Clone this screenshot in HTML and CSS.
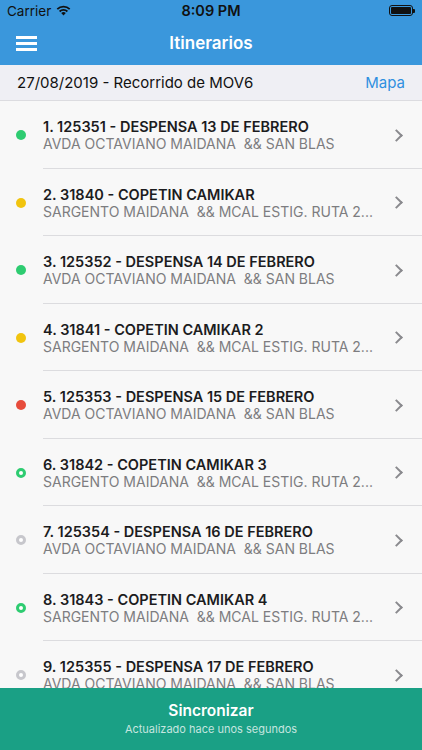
FILE: index.html
```html
<!DOCTYPE html>
<html lang="es">

<head>
    <meta charset="UTF-8">
    <meta name="viewport" content="width=device-width, initial-scale=1.0">
    <title>Itinerarios</title>
    <link rel="stylesheet" href="styles.css">
</head>

<body>
    <div class="app">
        <header class="topbar">
            <div class="status">
                <div class="status-left">
                    <span>Carrier</span>
                    <svg class="wifi" width="15" height="11" viewBox="0 0 15 11">
                        <path d="M7.5 10.5 L5.2 8.1 A3.3 3.3 0 0 1 9.8 8.1 Z" fill="#111"/>
                        <path d="M3.6 6.5 A5.6 5.6 0 0 1 11.4 6.5" stroke="#111" stroke-width="1.8" fill="none"/>
                        <path d="M1.3 4.2 A8.8 8.8 0 0 1 13.7 4.2" stroke="#111" stroke-width="1.8" fill="none"/>
                    </svg>
                </div>
                <div class="status-time">8:09 PM</div>
                <div class="status-right">
                    <div class="battery"><div class="battery-level"></div></div>
                    <div class="battery-tip"></div>
                </div>
            </div>
            <nav class="navbar">
                <button class="menu-btn" aria-label="menu">
                    <span></span><span></span><span></span>
                </button>
                <h1 class="nav-title">Itinerarios</h1>
            </nav>
        </header>

        <div class="subheader">
            <span class="route">27/08/2019 - Recorrido de MOV6</span>
            <a class="map-link" href="#">Mapa</a>
        </div>

        <ul class="stops">
            <li class="stop">
                <span class="dot green"></span>
                <div class="stop-text">
                    <div class="stop-title">1. 125351 - DESPENSA 13 DE FEBRERO</div>
                    <div class="stop-addr">AVDA OCTAVIANO MAIDANA  &amp;&amp; SAN BLAS</div>
                </div>
                <span class="chevron"></span>
            </li>
            <li class="stop">
                <span class="dot yellow"></span>
                <div class="stop-text">
                    <div class="stop-title">2. 31840 - COPETIN CAMIKAR</div>
                    <div class="stop-addr">SARGENTO MAIDANA  &amp;&amp; MCAL ESTIG. RUTA 2...</div>
                </div>
                <span class="chevron"></span>
            </li>
            <li class="stop">
                <span class="dot green"></span>
                <div class="stop-text">
                    <div class="stop-title">3. 125352 - DESPENSA 14 DE FEBRERO</div>
                    <div class="stop-addr">AVDA OCTAVIANO MAIDANA  &amp;&amp; SAN BLAS</div>
                </div>
                <span class="chevron"></span>
            </li>
            <li class="stop">
                <span class="dot yellow"></span>
                <div class="stop-text">
                    <div class="stop-title">4. 31841 - COPETIN CAMIKAR 2</div>
                    <div class="stop-addr">SARGENTO MAIDANA  &amp;&amp; MCAL ESTIG. RUTA 2...</div>
                </div>
                <span class="chevron"></span>
            </li>
            <li class="stop">
                <span class="dot red"></span>
                <div class="stop-text">
                    <div class="stop-title">5. 125353 - DESPENSA 15 DE FEBRERO</div>
                    <div class="stop-addr">AVDA OCTAVIANO MAIDANA  &amp;&amp; SAN BLAS</div>
                </div>
                <span class="chevron"></span>
            </li>
            <li class="stop">
                <span class="dot ring-green"></span>
                <div class="stop-text">
                    <div class="stop-title">6. 31842 - COPETIN CAMIKAR 3</div>
                    <div class="stop-addr">SARGENTO MAIDANA  &amp;&amp; MCAL ESTIG. RUTA 2...</div>
                </div>
                <span class="chevron"></span>
            </li>
            <li class="stop">
                <span class="dot ring-grey"></span>
                <div class="stop-text">
                    <div class="stop-title">7. 125354 - DESPENSA 16 DE FEBRERO</div>
                    <div class="stop-addr">AVDA OCTAVIANO MAIDANA  &amp;&amp; SAN BLAS</div>
                </div>
                <span class="chevron"></span>
            </li>
            <li class="stop">
                <span class="dot ring-green"></span>
                <div class="stop-text">
                    <div class="stop-title">8. 31843 - COPETIN CAMIKAR 4</div>
                    <div class="stop-addr">SARGENTO MAIDANA  &amp;&amp; MCAL ESTIG. RUTA 2...</div>
                </div>
                <span class="chevron"></span>
            </li>
            <li class="stop">
                <span class="dot ring-grey"></span>
                <div class="stop-text">
                    <div class="stop-title">9. 125355 - DESPENSA 17 DE FEBRERO</div>
                    <div class="stop-addr">AVDA OCTAVIANO MAIDANA  &amp;&amp; SAN BLAS</div>
                </div>
                <span class="chevron"></span>
            </li>
        </ul>

        <button class="sync">
            <span class="sync-title">Sincronizar</span>
            <span class="sync-sub">Actualizado hace unos segundos</span>
        </button>
    </div>
</body>

</html>
```

FILE: styles.css
```css
* {
    box-sizing: border-box;
}

body {
    margin: 0;
    font-family: Inter, "Noto Sans", sans-serif;
    background-color: #f8f8f8;
}

.app {
    display: flex;
    flex-direction: column;
    height: 750px;
    overflow: hidden;
}

/* top blue area */
.topbar {
    background-color: #3a97dc;
    height: 65px;
}

.status {
    display: flex;
    align-items: center;
    justify-content: space-between;
    height: 21px;
    padding: 0 7px;
    font-size: 13.5px;
    color: #111;
}

.status-left {
    display: flex;
    align-items: center;
    gap: 5px;
    width: 80px;
}

.status-time {
    font-weight: 600;
    font-size: 14.5px;
}

.status-right {
    display: flex;
    align-items: center;
    justify-content: flex-end;
    width: 80px;
}

.battery {
    width: 24px;
    height: 11px;
    border: 1px solid #111;
    border-radius: 3px;
    padding: 1px;
}

.battery-level {
    height: 100%;
    background-color: #111;
    border-radius: 1px;
}

.battery-tip {
    width: 1.5px;
    height: 4px;
    background-color: #111;
    border-radius: 0 1px 1px 0;
}

.navbar {
    position: relative;
    display: flex;
    align-items: center;
    justify-content: center;
    height: 44px;
}

.menu-btn {
    position: absolute;
    left: 16px;
    top: 15px;
    display: flex;
    flex-direction: column;
    gap: 3.5px;
    padding: 0;
    border: none;
    background: none;
}

.menu-btn span {
    display: block;
    width: 21px;
    height: 2.5px;
    background-color: #fff;
}

.nav-title {
    margin: 0;
    font-size: 17px;
    font-weight: 600;
    color: #fff;
}

/* date / route row */
.subheader {
    display: flex;
    align-items: center;
    justify-content: space-between;
    height: 36px;
    padding: 0 17px;
    background-color: #efeff4;
    border-bottom: 1px solid #dcdce0;
    font-size: 15px;
    color: #111;
}

.map-link {
    color: #2f8fe0;
    text-decoration: none;
}

/* stops list */
.stops {
    flex: 1;
    margin: 0;
    padding: 0;
    list-style: none;
    overflow: hidden;
    background-color: #f8f8f8;
}

.stop {
    position: relative;
    display: flex;
    align-items: center;
    height: 67.5px;
    padding: 1px 17px 0 16px;
}

.stop::after {
    content: "";
    position: absolute;
    left: 43px;
    right: 0;
    bottom: 0;
    height: 1px;
    background-color: #dcdcdf;
}

.dot {
    flex-shrink: 0;
    width: 10px;
    height: 10px;
    border-radius: 50%;
    margin-right: 17px;
}

.dot.green {
    background-color: #2ecc71;
}

.dot.yellow {
    background-color: #f1c40f;
}

.dot.red {
    background-color: #e74c3c;
}

.dot.ring-green {
    border: 3px solid #2ecc71;
    background-color: #fff;
}

.dot.ring-grey {
    border: 3px solid #c7c7cc;
    background-color: #fff;
}

.stop-text {
    flex: 1;
    min-width: 0;
    padding-right: 20px;
}

.stop-title {
    font-size: 14.5px;
    font-weight: 600;
    color: #1c1c1e;
    line-height: 17px;
}

.stop-addr {
    font-size: 14px;
    color: #7d7d80;
    line-height: 17px;
    white-space: pre;
}

.chevron {
    flex-shrink: 0;
    width: 9px;
    height: 9px;
    border-top: 2px solid #8a8a8e;
    border-right: 2px solid #8a8a8e;
    transform: rotate(45deg);
    margin-right: 4px;
}

/* bottom sync button */
.sync {
    display: flex;
    flex-direction: column;
    align-items: center;
    justify-content: center;
    gap: 2px;
    height: 62px;
    padding-bottom: 2px;
    border: none;
    background-color: #1aa085;
    color: #fff;
    font-family: inherit;
}

.sync-title {
    font-size: 15.5px;
    font-weight: 600;
}

.sync-sub {
    font-size: 11px;
    color: rgba(255, 255, 255, 0.75);
}
```
